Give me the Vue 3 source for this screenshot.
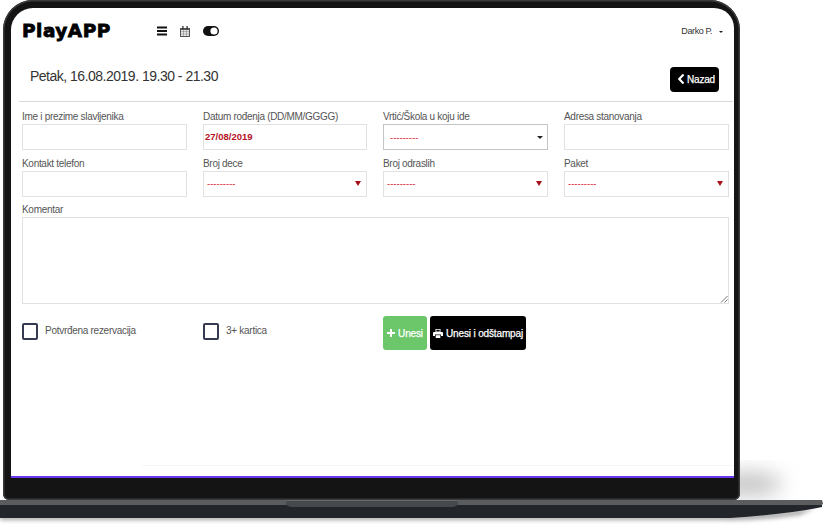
<template>
  <div class="page">
    <svg class="base" width="830" height="529" viewBox="0 0 830 529">
      <defs>
        <filter id="blur" x="-50%" y="-50%" width="200%" height="200%"><feGaussianBlur stdDeviation="10" /></filter>
        <filter id="blur2" x="-10%" y="-200%" width="120%" height="500%"><feGaussianBlur stdDeviation="2" /></filter>
      </defs>
      <ellipse cx="748" cy="484" rx="34" ry="12" fill="#c4c4c4" filter="url(#blur)" />
      <path d="M0 515 H720 Q775 514 815 508 L800 515 Q760 521 720 520 H0 Z" fill="#a8a8a8" filter="url(#blur2)" />
      <path d="M0 503 H822 V507 Q790 514 730 518 H0 Z" fill="#22252a" />
      <path d="M0 500 H822 L823 503.500 L822 505 H0 Z" fill="#5a5c5e" />
      <path d="M286 499 H458 V504 Q456 507 452 507 H292 Q288 507 286 504 Z" fill="#45494c" />
      <path d="M286 498.500 H458 V501 H286 Z" fill="#68696a" />
    </svg>

    <div class="laptop">
      <div class="screen">
        <header class="topbar">
          <div class="logo">PlayAPP</div>
          <div class="tools">
            <svg width="10" height="10" viewBox="0 0 10 10"><path d="M0 0.500h10v2H0zM0 4h10v2H0zM0 7.500h10v2H0z" fill="#111" /></svg>
            <svg width="10" height="11" viewBox="0 0 10 11"><path d="M0 2h10v9H0z" fill="#555" /><path d="M1 4h8v6H1z" fill="#e4e4e4" /><path d="M2.300 0h1.200v3H2.300zM6.500 0h1.200v3H6.500z" fill="#222" /><path d="M1 5.500h8v.6H1zM1 7.700h8v.6H1zM3 4h.6v6H3zM6.300 4h.6v6h-.6z" fill="#888" /></svg>
            <svg width="16" height="10" viewBox="0 0 16 10"><rect width="16" height="10" rx="5" fill="#111" /><circle cx="11" cy="5" r="3.600" fill="#fff" /></svg>
          </div>
          <div class="user">Darko P.<span class="caret"></span></div>
        </header>

        <div class="heading">
          <h1>Petak, 16.08.2019. 19.30 - 21.30</h1>
          <button class="back">
            <svg width="7" height="10" viewBox="0 0 7 10"><path d="M5.500 0.500 1.200 5l4.300 4.500" fill="none" stroke="#fff" stroke-width="2.200" /></svg>
            Nazad
          </button>
        </div>

        <form class="form" @submit.prevent>
          <div class="grid">
            <div v-for="f in fields" :key="f.label" class="field">
              <label>{{ f.label }}</label>
              <div class="control" :class="{ dark: f.dark }">
                <span v-if="f.value" class="value date">{{ f.value }}</span>
                <template v-if="f.select">
                  <span class="value" :class="{ inset: f.dark }">---------</span>
                  <i class="arrow"></i>
                </template>
              </div>
            </div>
          </div>

          <div class="field comment">
            <label>Komentar</label>
            <div class="textarea">
              <svg width="8" height="8" viewBox="0 0 8 8"><path d="M7.500 1 1 7.500M7.500 4.500 4.500 7.500" stroke="#777" fill="none" /></svg>
            </div>
          </div>

          <div class="actions">
            <div class="check"><i class="box"></i><span>Potvrđena rezervacija</span></div>
            <div class="check"><i class="box"></i><span>3+ kartica</span></div>
            <div class="buttons">
              <button class="btn green">
                <svg width="8" height="8" viewBox="0 0 8 8"><path d="M3 0h2v3h3v2H5v3H3V5H0V3h3z" fill="#fff" /></svg>
                Unesi
              </button>
              <button class="btn black">
                <svg width="10" height="9" viewBox="0 0 10 9"><path d="M2.500 0h5v3h-5zM3.300 .8v1.700h3.400V.8z" fill="#fff" fill-rule="evenodd" /><path d="M1 3h8q1 0 1 1v3H8V5.500H2V7H0V4q0-1 1-1z" fill="#fff" /><path d="M2.700 6.200h4.600V9H2.700z" fill="#fff" /></svg>
                Unesi i odštampaj
              </button>
            </div>
          </div>
        </form>

        <div class="rule"></div>
      </div>
    </div>
  </div>
</template>

<script setup>
const fields = [
  { label: 'Ime i prezime slavljenika' },
  { label: 'Datum rođenja (DD/MM/GGGG)', value: '27/08/2019' },
  { label: 'Vrtić/Škola u koju ide', select: true, dark: true },
  { label: 'Adresa stanovanja' },
  { label: 'Kontakt telefon' },
  { label: 'Broj dece', select: true },
  { label: 'Broj odraslih', select: true },
  { label: 'Paket', select: true }
]
</script>

<style>
html, body { margin: 0; background: #fff; overflow: hidden; }
</style>

<style scoped>
.page {
  position: relative;
  width: 830px;
  height: 529px;
  overflow: hidden;
  background: #fff;
  font-family: "Liberation Sans", Arial, sans-serif;
}

.base {
  position: absolute;
  left: 0;
  top: 0;
}

.laptop {
  position: relative;
  box-sizing: border-box;
  width: 737px;
  height: 500px;
  margin-left: 3px;
  background: #141414;
  border-radius: 30px 30px 6px 6px;
  box-shadow: inset 0 0 0 1.500px #3a3a3c;
  padding: 8px 6px 0 8px;
}

.screen {
  position: relative;
  box-sizing: border-box;
  height: 470px;
  background: #fff;
  border-radius: 22px 20px 0 0;
  border-bottom: 2px solid #6a38f0;
}

.topbar {
  display: flex;
  align-items: center;
  height: 30px;
  padding: 8px 11px 0 11px;
}

.logo {
  width: 135px;
  margin-top: -2px;
  font-family: "DejaVu Sans", sans-serif;
  font-size: 18.500px;
  font-weight: 700;
  letter-spacing: 0.500px;
  color: #000;
  -webkit-text-stroke: 0.800px #000;
}

.tools {
  display: flex;
  align-items: center;
  gap: 13px;
}

.user {
  margin-left: auto;
  font-size: 9px;
  letter-spacing: -0.400px;
  color: #333;
}

.caret {
  display: inline-block;
  margin-left: 7px;
  vertical-align: 1px;
  border: 2.500px solid transparent;
  border-top-color: #222;
  border-bottom: 0;
}

.heading {
  display: flex;
  justify-content: space-between;
  align-items: center;
  height: 55px;
  margin: 0 1px 0 8px;
  padding: 0 14px 0 11px;
  border-bottom: 1px solid #d8d8d8;
}

.heading h1 {
  margin: 4px 0 0;
  font-size: 14px;
  font-weight: 400;
  letter-spacing: -0.500px;
  color: #333;
}

.back {
  display: flex;
  align-items: center;
  gap: 2px;
  height: 25px;
  width: 49px;
  margin-top: 16px;
  margin-bottom: 5px;
  padding: 0 0 0 8px;
  border: 0;
  border-radius: 4px;
  background: #000;
  color: #fff;
  font: 400 10px "Liberation Sans", Arial, sans-serif;
  letter-spacing: -0.200px;
  -webkit-text-stroke: 0.250px #fff;
}

.form {
  padding: 7px 5px 0 11px;
}

.grid {
  display: grid;
  grid-template-columns: 165px 164px 165px 165px;
  column-gap: 16px;
  row-gap: 6px;
}

label {
  display: block;
  height: 15px;
  font-size: 10px;
  line-height: 15px;
  letter-spacing: -0.300px;
  color: #555;
}

.control {
  position: relative;
  box-sizing: border-box;
  display: flex;
  align-items: center;
  height: 26px;
  padding: 0 3px;
  border: 1px solid #e2e2e2;
  background: #fff;
}

.control.dark {
  border-color: #c4c4c4;
}

.value {
  font-size: 9.500px;
  line-height: 12px;
  color: #d80c1c;
}

.value.inset {
  padding-left: 3px;
  padding-top: 1px;
}

.date {
  margin-left: -2px;
  font-weight: 700;
  color: #b5121e;
}

.arrow {
  position: absolute;
  right: 5px;
  top: 9px;
  border: 3px solid transparent;
  border-top: 5px solid #a50f18;
  border-bottom: 0;
}

.dark .arrow {
  top: 11px;
  right: 4px;
  border-width: 3px 3px 0;
  border-top-color: #222;
}

.comment {
  margin-top: 5px;
}

.textarea {
  box-sizing: border-box;
  position: relative;
  height: 87px;
  border: 1px solid #e2e2e2;
}

.textarea svg {
  position: absolute;
  right: 0;
  bottom: 0;
}

.actions {
  display: grid;
  grid-template-columns: 181px 180px auto;
  align-items: center;
  margin-top: 12px;
}

.check {
  display: flex;
  align-items: flex-start;
  gap: 7px;
  margin-top: -3px;
  font-size: 10px;
  letter-spacing: -0.280px;
  color: #555;
}

.check span {
  margin-top: 2px;
}

.box {
  box-sizing: border-box;
  width: 16px;
  height: 17px;
  border: 2px solid #363a52;
  border-radius: 2px;
}

.buttons {
  display: flex;
  gap: 3px;
}

.btn {
  display: flex;
  align-items: center;
  justify-content: center;
  gap: 3px;
  height: 34px;
  padding: 0;
  border: 0;
  border-radius: 3px;
  color: #fff;
  font: 400 10px "Liberation Sans", Arial, sans-serif;
  letter-spacing: -0.150px;
  white-space: nowrap;
  -webkit-text-stroke: 0.250px #fff;
}

.green {
  width: 44px;
  background: #6cc66a;
}

.black {
  width: 96px;
  background: #000;
}

.rule {
  position: absolute;
  left: 131px;
  right: 0;
  bottom: 10px;
  height: 1px;
  background: #f6f6f6;
}
</style>
